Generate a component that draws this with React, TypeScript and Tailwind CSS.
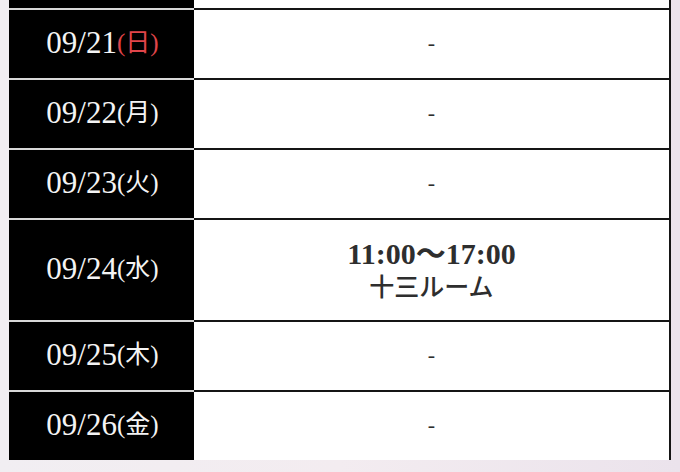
const rows: { date: string; day: string; sunday?: boolean; lines: string[]; tall?: boolean }[] = [
  { date: "09/21", day: "(日)", sunday: true, lines: ["-"] },
  { date: "09/22", day: "(月)", lines: ["-"] },
  { date: "09/23", day: "(火)", lines: ["-"] },
  { date: "09/24", day: "(水)", lines: ["11:00〜17:00", "十三ルーム"], tall: true },
  { date: "09/25", day: "(木)", lines: ["-"] },
  { date: "09/26", day: "(金)", lines: ["-"] },
];

const font = { fontFamily: '"Liberation Serif", "Noto Sans CJK JP", serif' };

function Sep() {
  return (
    <div className="flex h-[2px]">
      <div className="w-[185px] bg-[#d8d8d8]" />
      <div className="flex-1 bg-[#151515]" />
    </div>
  );
}

export default function App() {
  return (
    <div
      className="w-[680px] h-[472px] overflow-hidden bg-gradient-to-r from-[#f1eef2] via-[#f3ecf0] to-[#ebe3ec]"
      style={font}
    >
      <div className="ml-[9px] w-[662px] border-r-2 border-[#151515]">
        <div className="flex h-[8px]">
          <div className="w-[185px] bg-black" />
          <div className="flex-1 bg-white" />
        </div>
        {rows.map((r) => (
          <div key={r.date}>
            <Sep />
            <div className={`flex ${r.tall ? "h-[100px]" : "h-[68px]"}`}>
              <div className="w-[185px] bg-black flex items-center justify-center text-[#f4f4f4] pb-[2px] pl-[2px]">
                <span className="text-[31px]">{r.date}</span>
                <span className={`text-[25px] ${r.sunday ? "text-[#e0454a]" : ""}`}>{r.day}</span>
              </div>
              <div className="flex-1 bg-white flex flex-col items-center justify-center text-[#2e2e2e] pt-[2px]">
                {r.lines.map((l, i) => (
                  <div
                    key={l}
                    className={
                      l === "-"
                        ? "text-[22px] leading-[30px] mb-[4px]"
                        : i === 0
                          ? "text-[30px] font-semibold leading-[34px]"
                          : "text-[25px] font-medium leading-[34px]"
                    }
                  >
                    {l}
                  </div>
                ))}
              </div>
            </div>
          </div>
        ))}
      </div>
    </div>
  );
}
